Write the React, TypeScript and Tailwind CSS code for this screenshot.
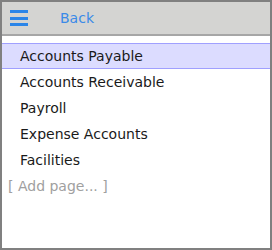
export default function App() {
  const pages = ["Accounts Payable", "Accounts Receivable", "Payroll", "Expense Accounts", "Facilities"];

  return (
    <div className="h-[250px] w-[272px] border-2 border-[#808080] bg-white font-['DejaVu_Sans',sans-serif] text-[14px]">
      <div className="flex h-[34px] items-center border-b-2 border-[#a6a6a6] bg-[#d4d4d2]">
        <button className="ml-[8px] flex h-[20px] w-[18px] flex-col justify-between py-[2px]">
          <span className="block h-[3px] w-full bg-[#2b85e8]" />
          <span className="block h-[3px] w-full bg-[#2b85e8]" />
          <span className="block h-[3px] w-full bg-[#2b85e8]" />
        </button>
        <span className="ml-[32px] text-[#3a8ae8]">Back</span>
      </div>
      <ul className="mt-[7px]">
        {pages.map((p, i) => (
          <li
            key={i}
            className={
              i === 0
                ? "flex h-[26px] items-center border-y border-[#a0a0ff] bg-[#dcdcff] pl-[18px] text-[#1a1a1a]"
                : "flex h-[26px] items-center pl-[18px] text-[#1a1a1a]"
            }
          >
            {p}
          </li>
        ))}
        <li className="flex h-[26px] items-center pl-[6px] text-[#a0a0a0]">[ Add page... ]</li>
      </ul>
    </div>
  );
}
